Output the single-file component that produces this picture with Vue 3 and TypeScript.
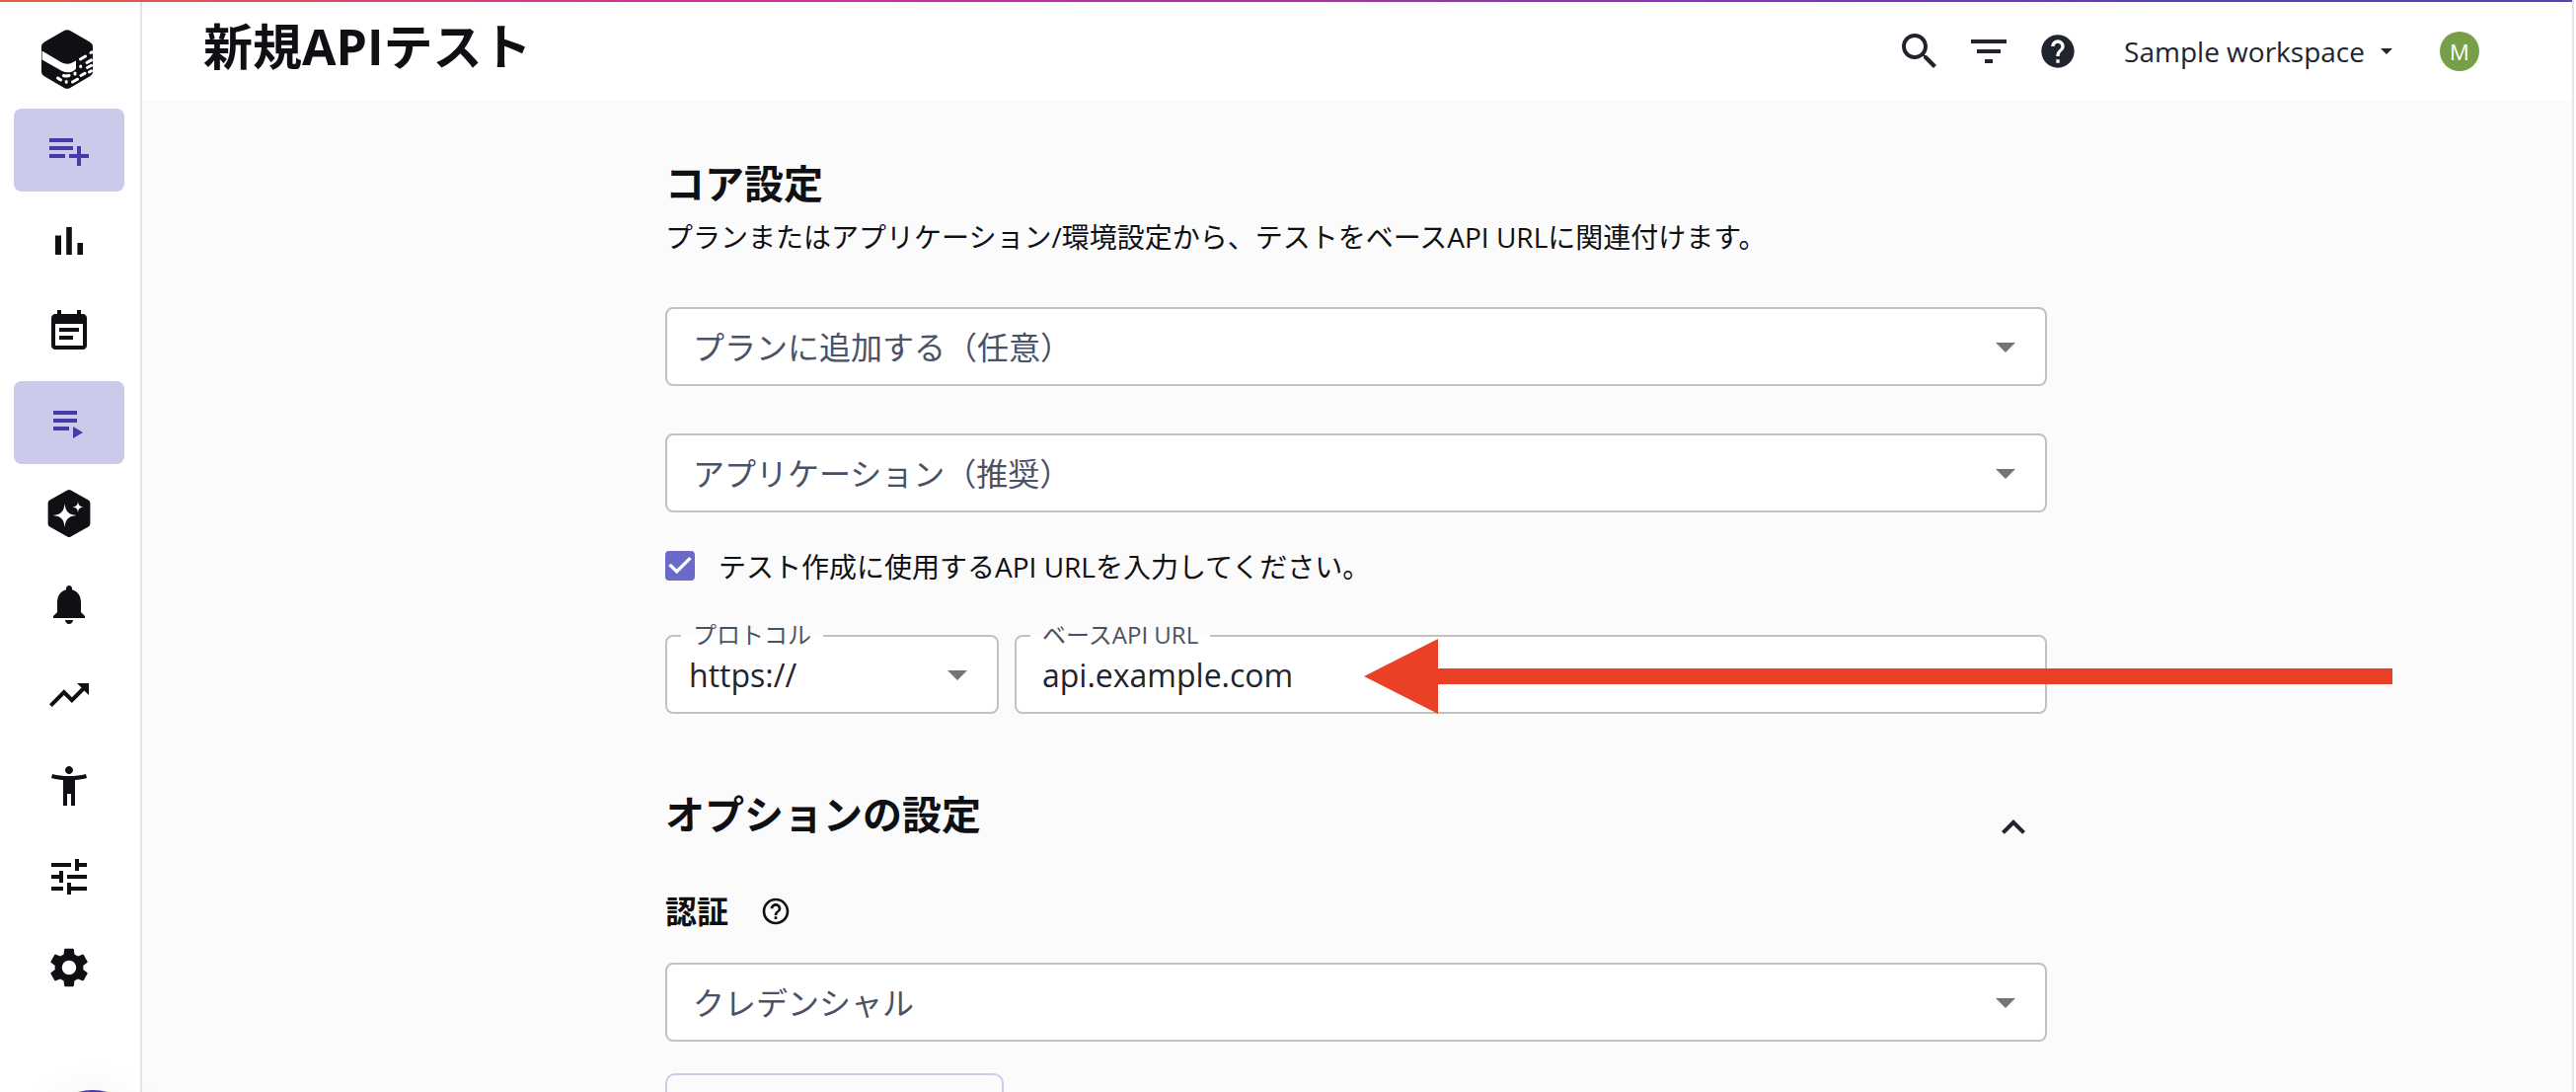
<script setup lang="ts">
import { ref } from 'vue'

interface NavItem {
  name: string
  label: string
  path: string
  active?: boolean
}

const navItems: NavItem[] = [
  {
    name: 'create',
    label: '新規作成',
    active: true,
    path: 'M14 10H2v2h12v-2zm0-4H2v2h12V6zm4 8v-4h-2v4h-4v2h4v4h2v-4h4v-2h-4zM2 16h8v-2H2v2z',
  },
  {
    name: 'dashboard',
    label: 'ダッシュボード',
    path: 'M5 9.2h3V19H5zM10.6 5h2.8v14h-2.8zM16.2 13H19v6h-2.8z',
  },
  {
    name: 'schedule',
    label: 'スケジュール',
    path: 'M17 10H7v2h10v-2zm2-7h-1V1h-2v2H8V1H6v2H5c-1.11 0-1.99.9-1.99 2L3 19c0 1.1.89 2 2 2h14c1.1 0 2-.9 2-2V5c0-1.1-.9-2-2-2zm0 16H5V8h14v11zm-5-5H7v2h7v-2z',
  },
  {
    name: 'tests',
    label: 'テスト',
    active: true,
    path: 'M4 10h12v2H4zM4 6h12v2H4zM4 14h8v2H4zM14 14v6l5-3z',
  },
  {
    name: 'assistant',
    label: 'アシスタント',
    path: 'M11.1.3a1.8 1.8 0 0 1 1.8 0l8.9 4.9a1.7 1.7 0 0 1 .9 1.5v10.6a1.7 1.7 0 0 1-.9 1.5l-8.9 4.9a1.8 1.8 0 0 1-1.8 0l-8.9-4.9a1.7 1.7 0 0 1-.9-1.5V6.7a1.7 1.7 0 0 1 .9-1.5zM9.8 7C9.3 11.2 8 12.5 3.8 13c4.2.5 5.5 1.8 6 6 .5-4.2 1.8-5.5 6-6-4.2-.5-5.5-1.8-6-6zM16.5 6c-.25 1.9-.9 2.5-2.8 2.75 1.9.25 2.55.85 2.8 2.75.25-1.9.9-2.5 2.8-2.75-1.9-.25-2.55-.85-2.8-2.75z',
  },
  {
    name: 'notifications',
    label: '通知',
    path: 'M12 22c1.1 0 2-.9 2-2h-4c0 1.1.89 2 2 2zm6-6v-5c0-3.07-1.64-5.64-4.5-6.32V4c0-.83-.67-1.5-1.5-1.5s-1.5.67-1.5 1.5v.68C7.63 5.36 6 7.92 6 11v5l-2 2v1h16v-1l-2-2z',
  },
  {
    name: 'trends',
    label: 'トレンド',
    path: 'M16 6l2.29 2.29-4.88 4.88-4-4L2 16.59 3.41 18l6-6 4 4 6.3-6.29L22 12V6z',
  },
  {
    name: 'accessibility',
    label: 'アクセシビリティ',
    path: 'M20.5 6c-2.61.7-5.67 1-8.5 1s-5.89-.3-8.5-1L3 8c1.86.5 4 .83 6 1v13h2v-6h2v6h2V9c2-.17 4.14-.5 6-1l-.5-2zM12 6c1.1 0 2-.9 2-2s-.9-2-2-2-2 .9-2 2 .9 2 2 2z',
  },
  {
    name: 'configuration',
    label: '構成',
    path: 'M3 17v2h6v-2H3zM3 5v2h10V5H3zm10 16v-2h8v-2h-8v-2h-2v6h2zM7 9v2H3v2h4v2h2V9H7zm14 4v-2H11v2h10zm-6-4h2V7h4V5h-4V3h-2v6z',
  },
  {
    name: 'settings',
    label: '設定',
    path: 'M19.14 12.94c.04-.3.06-.61.06-.94 0-.32-.02-.64-.07-.94l2.03-1.58c.18-.14.23-.41.12-.61l-1.92-3.32c-.12-.22-.37-.29-.59-.22l-2.39.96c-.5-.38-1.03-.7-1.62-.94l-.36-2.54c-.04-.24-.24-.41-.48-.41h-3.84c-.24 0-.43.17-.47.41l-.36 2.54c-.59.24-1.13.57-1.62.94l-2.39-.96c-.22-.08-.47 0-.59.22L2.74 8.87c-.12.21-.08.47.12.61l2.03 1.58c-.05.3-.09.63-.09.94s.02.64.07.94l-2.03 1.58c-.18.14-.23.41-.12.61l1.92 3.32c.12.22.37.29.59.22l2.39-.96c.5.38 1.03.7 1.62.94l.36 2.54c.05.24.24.41.48.41h3.84c.24 0 .44-.17.47-.41l.36-2.54c.59-.24 1.13-.56 1.62-.94l2.39.96c.22.08.47 0 .59-.22l1.92-3.32c.12-.22.07-.47-.12-.61l-2.01-1.58zM12 15.6c-1.98 0-3.6-1.62-3.6-3.6s1.62-3.6 3.6-3.6 3.6 1.62 3.6 3.6-1.62 3.6-3.6 3.6z',
  },
]

const plan = ref('')
const application = ref('')
const credential = ref('')
const protocol = ref('https://')
const baseUrl = ref('api.example.com')
const useApiUrl = ref(true)
</script>

<template>
  <div class="app">
    <div class="rainbow"></div>

    <nav class="sidebar">
      <a class="logo" href="#" aria-label="ホーム">
        <svg viewBox="0 0 52 60">
          <path fill="#0f1014" d="M23 1a6 6 0 0 1 6 0l20 11.5a6 6 0 0 1 3 5v25a5 5 0 0 1-2.500 4.500L29 59a6 6 0 0 1-6 0L2.500 47A5 5 0 0 1 0 42.500v-25a6 6 0 0 1 3-5z" />
          <path fill="#fff" d="M.6 21.5L20 33c3.200 1.800 7.500 2.200 10.500.8l4.500-2.400v8.300c-3.500 4-9.500 4.600-14 2.200L.6 30.500z" />
          <g stroke="#fff" stroke-width="3" stroke-linecap="round" fill="none">
            <path d="M39.500 30l5-3M50 23.500l1-.6M46 33.500l4.500-2.600M39.700 37v.5M46.500 38.500l4-2.300M40 46.500l4-2.300M48.500 43l2-1.200M31.500 53l5-2.800M16.500 49l3 2M22.500 46.500c2 .8 3.500.8 5.500 0M34 44v1M25.200 52.500v.8" />
          </g>
        </svg>
      </a>
      <a
        v-for="item in navItems"
        :key="item.name"
        href="#"
        class="nav-item"
        :class="{ active: item.active }"
        :aria-label="item.label"
      >
        <svg class="icon" viewBox="0 0 24 24"><path fill-rule="evenodd" :d="item.path" /></svg>
      </a>
      <button class="bubble" type="button" aria-label="チャット"></button>
    </nav>

    <div class="page">
      <header class="topbar">
        <h1>新規APIテスト</h1>
        <div class="tools">
          <button type="button" class="tool" aria-label="検索">
            <svg class="icon" viewBox="0 0 24 24"><path d="M15.5 14h-.79l-.28-.27C15.41 12.59 16 11.11 16 9.5 16 5.91 13.09 3 9.5 3S3 5.91 3 9.5 5.91 16 9.5 16c1.61 0 3.09-.59 4.23-1.57l.27.28v.79l5 4.99L20.49 19l-4.99-5zm-6 0C7.01 14 5 11.99 5 9.5S7.01 5 9.5 5 14 7.01 14 9.5 11.99 14 9.5 14z" /></svg>
          </button>
          <button type="button" class="tool" aria-label="フィルター">
            <svg class="icon" viewBox="0 0 24 24"><path d="M10 18h4v-2h-4v2zM3 6v2h18V6H3zm3 7h12v-2H6v2z" /></svg>
          </button>
          <button type="button" class="tool" aria-label="ヘルプ">
            <svg class="icon medium" viewBox="0 0 24 24"><path d="M12 2C6.48 2 2 6.48 2 12s4.48 10 10 10 10-4.48 10-10S17.52 2 12 2zm1 17h-2v-2h2v2zm2.07-7.75l-.9.92C13.45 12.9 13 13.5 13 15h-2v-.5c0-1.1.45-2.1 1.17-2.83l1.24-1.26c.37-.36.59-.86.59-1.41 0-1.1-.9-2-2-2s-2 .9-2 2H8c0-2.21 1.79-4 4-4s4 1.79 4 4c0 .88-.36 1.68-.93 2.25z" /></svg>
          </button>
          <button type="button" class="workspace">
            Sample workspace
            <svg class="caret" viewBox="0 0 12 6"><path d="M0 0h12L6 6z" /></svg>
          </button>
          <button type="button" class="avatar">M</button>
        </div>
      </header>

      <main class="content">
        <section class="core">
          <h2>コア設定</h2>
          <p>プランまたはアプリケーション/環境設定から、テストをベースAPI URLに関連付けます。</p>
        </section>

        <div class="field">
          <select v-model="plan" class="placeholder" aria-label="プランに追加する（任意）">
            <option value="">プランに追加する（任意）</option>
          </select>
          <svg class="icon arrow" viewBox="0 0 24 24"><path d="M7 10l5 5 5-5z" /></svg>
        </div>

        <div class="field second">
          <select v-model="application" class="placeholder" aria-label="アプリケーション（推奨）">
            <option value="">アプリケーション（推奨）</option>
          </select>
          <svg class="icon arrow" viewBox="0 0 24 24"><path d="M7 10l5 5 5-5z" /></svg>
        </div>

        <label class="check-row">
          <span class="check">
            <input v-model="useApiUrl" type="checkbox" />
            <svg v-if="useApiUrl" viewBox="3 3 18 18"><path d="M10 17l-5-5 1.41-1.41L10 14.17l7.59-7.59L19 8z" /></svg>
          </span>
          テスト作成に使用するAPI URLを入力してください。
        </label>

        <div class="url-row">
          <div class="field protocol">
            <label for="protocol">プロトコル</label>
            <select id="protocol" v-model="protocol">
              <option>https://</option>
            </select>
            <svg class="icon arrow" viewBox="0 0 24 24"><path d="M7 10l5 5 5-5z" /></svg>
          </div>
          <div class="field base">
            <label for="base-url">ベースAPI URL</label>
            <input id="base-url" v-model="baseUrl" type="text" />
            <svg class="pointer" viewBox="0 0 1042 76"><path d="M0 38L75 0v30h967v16H75v30z" /></svg>
          </div>
        </div>

        <section class="options-head">
          <h2>オプションの設定</h2>
          <button type="button" aria-label="折りたたむ">
            <svg class="icon" viewBox="0 0 24 24"><path d="M12 8l-6 6 1.41 1.41L12 10.83l4.59 4.58L18 14z" /></svg>
          </button>
        </section>

        <div class="auth-head">
          <h3>認証</h3>
          <svg class="icon small" viewBox="0 0 24 24"><path d="M11 18h2v-2h-2v2zm1-16C6.48 2 2 6.48 2 12s4.48 10 10 10 10-4.48 10-10S17.52 2 12 2zm0 18c-4.41 0-8-3.59-8-8s3.59-8 8-8 8 3.59 8 8-3.59 8-8 8zm0-14c-2.21 0-4 1.79-4 4h2c0-1.1.9-2 2-2s2 .9 2 2c0 2-3 1.75-3 5h2c0-2.25 3-2.5 3-5 0-2.21-1.79-4-4-4z" /></svg>
        </div>

        <div class="field">
          <select v-model="credential" class="placeholder" aria-label="クレデンシャル">
            <option value="">クレデンシャル</option>
          </select>
          <svg class="icon arrow" viewBox="0 0 24 24"><path d="M7 10l5 5 5-5z" /></svg>
        </div>

        <button type="button" class="outlined" aria-label="追加"></button>
      </main>
    </div>
  </div>
</template>

<style>
body {
  overflow: hidden;
}
</style>

<style scoped>
.app {
  position: relative;
  display: flex;
  height: 100vh;
  overflow: hidden;
  box-sizing: border-box;
  padding-right: 2px;
  background: #fff;
  color: #0f1014;
  font-family: "Open Sans", "Noto Sans CJK JP", sans-serif;
  font-size: 28px;
}

.app *,
.app *::before {
  box-sizing: border-box;
}

button,
select,
input {
  font: inherit;
  color: inherit;
}

button {
  border: 0;
  padding: 0;
  background: none;
}

h1,
h2,
h3,
p {
  margin: 0;
}

.icon {
  display: block;
  width: 48px;
  height: 48px;
  fill: currentColor;
}

.icon.medium {
  width: 40px;
  height: 40px;
}

.icon.small {
  width: 32px;
  height: 32px;
}

.rainbow {
  position: absolute;
  z-index: 2;
  top: 0;
  left: 0;
  right: 4px;
  height: 2px;
  background: linear-gradient(90deg, #e0623f 0%, #cf3591 24%, #b42fa8 45%, #7a35b8 72%, #5543b3 88%, #5543b3 100%);
  box-shadow: 0 2px 10px rgba(0, 0, 0, 0.1);
}

.sidebar {
  position: relative;
  flex: none;
  display: flex;
  flex-direction: column;
  gap: 8px;
  width: 144px;
  padding: 30px 16px 0 14px;
  border-right: 2px solid #e4e4ea;
}

.logo {
  display: flex;
  justify-content: center;
  height: 72px;
}

.logo svg {
  width: 52px;
  height: 60px;
  margin-right: 4px;
}

.nav-item {
  flex: none;
  display: flex;
  align-items: center;
  justify-content: center;
  height: 84px;
  border-radius: 8px;
  color: #0f1014;
}

.nav-item.active {
  background: #cbcaeb;
  color: #4939ab;
}

.bubble {
  position: absolute;
  left: 38px;
  bottom: -110px;
  width: 112px;
  height: 112px;
  border-radius: 50%;
  background: #4939ab;
  box-shadow: 0 0 40px rgba(0, 0, 0, 0.05);
}

.page {
  flex: 1;
  min-width: 0;
  border-right: 2px solid #e6e6ea;
  background: #fbfbfb;
}

.topbar {
  display: flex;
  align-items: flex-start;
  justify-content: space-between;
  height: 102px;
  padding: 0 94px 0 62px;
  background: #fff;
}

h1 {
  padding-top: 16px;
  font-size: 50px;
  line-height: 62px;
  font-weight: 700;
}

.tools {
  display: flex;
  align-items: center;
  height: 104px;
  color: #20242e;
}

.tool {
  display: flex;
  align-items: center;
  justify-content: center;
  width: 70px;
  height: 70px;
}

.workspace {
  display: flex;
  align-items: center;
  gap: 16px;
  margin-left: 32px;
  line-height: 40px;
}

.caret {
  width: 12px;
  height: 6px;
  fill: currentColor;
}

.avatar {
  width: 40px;
  height: 40px;
  margin-left: 48px;
  border-radius: 50%;
  background: #769f47;
  color: #fff;
  font-size: 22px;
  line-height: 40px;
  text-align: center;
}

.content {
  max-width: 1402px;
  margin: 0 auto;
  padding-right: 2px;
}

h2 {
  font-size: 40px;
  line-height: 50px;
  font-weight: 700;
}

.core {
  padding: 59px 0 50px;
}

.core p {
  margin-top: 8px;
  line-height: 42px;
}

.field {
  position: relative;
  height: 80px;
  font-size: 32px;
}

.field select,
.field input {
  display: block;
  appearance: none;
  width: 100%;
  height: 80px;
  margin: 0;
  padding: 0 26px;
  border: 2px solid #c2c2c2;
  border-radius: 8px;
  background: #fff;
  color: #20242e;
  outline: 0;
}

.field select.placeholder {
  color: #4a5266;
}

.field .arrow {
  position: absolute;
  top: 16px;
  right: 18px;
  color: #757575;
  pointer-events: none;
}

.second {
  margin-top: 48px;
}

.check-row {
  display: flex;
  align-items: center;
  gap: 24px;
  height: 48px;
  margin: 30px 0 46px;
}

.check {
  position: relative;
  width: 30px;
  height: 30px;
}

.check input {
  display: block;
  appearance: none;
  width: 30px;
  height: 30px;
  margin: 0;
  border: 2px solid #6b69ca;
  border-radius: 4px;
}

.check input:checked {
  background: #6b69ca;
}

.check svg {
  position: absolute;
  inset: 0;
  fill: #fff;
}

.url-row {
  display: flex;
  gap: 16px;
}

.protocol {
  flex: 0 0 338px;
}

.field.protocol select {
  padding-left: 22px;
}

.base {
  flex: 1;
}

.field label {
  position: absolute;
  top: -16px;
  left: 16px;
  padding: 0 12px;
  background: linear-gradient(#fbfbfb 50%, #fff 50%);
  color: #4a5266;
  font-size: 24px;
  line-height: 32px;
}

.pointer {
  position: absolute;
  top: 4px;
  right: -350px;
  width: 1042px;
  height: 76px;
  fill: #ea4026;
  pointer-events: none;
}

.options-head {
  display: flex;
  align-items: flex-end;
  justify-content: space-between;
  margin-top: 77px;
  padding-right: 10px;
}

.options-head h2 {
  padding-bottom: 12px;
}

.options-head button {
  color: #20242e;
}

.auth-head {
  display: flex;
  align-items: center;
  gap: 32px;
  height: 48px;
  margin: 37px 0 28px;
}

h3 {
  font-size: 32px;
  line-height: 48px;
  font-weight: 700;
}

.outlined {
  display: block;
  width: 343px;
  height: 80px;
  margin-top: 32px;
  border: 2px solid #cbcaeb;
  border-radius: 10px;
}
</style>
